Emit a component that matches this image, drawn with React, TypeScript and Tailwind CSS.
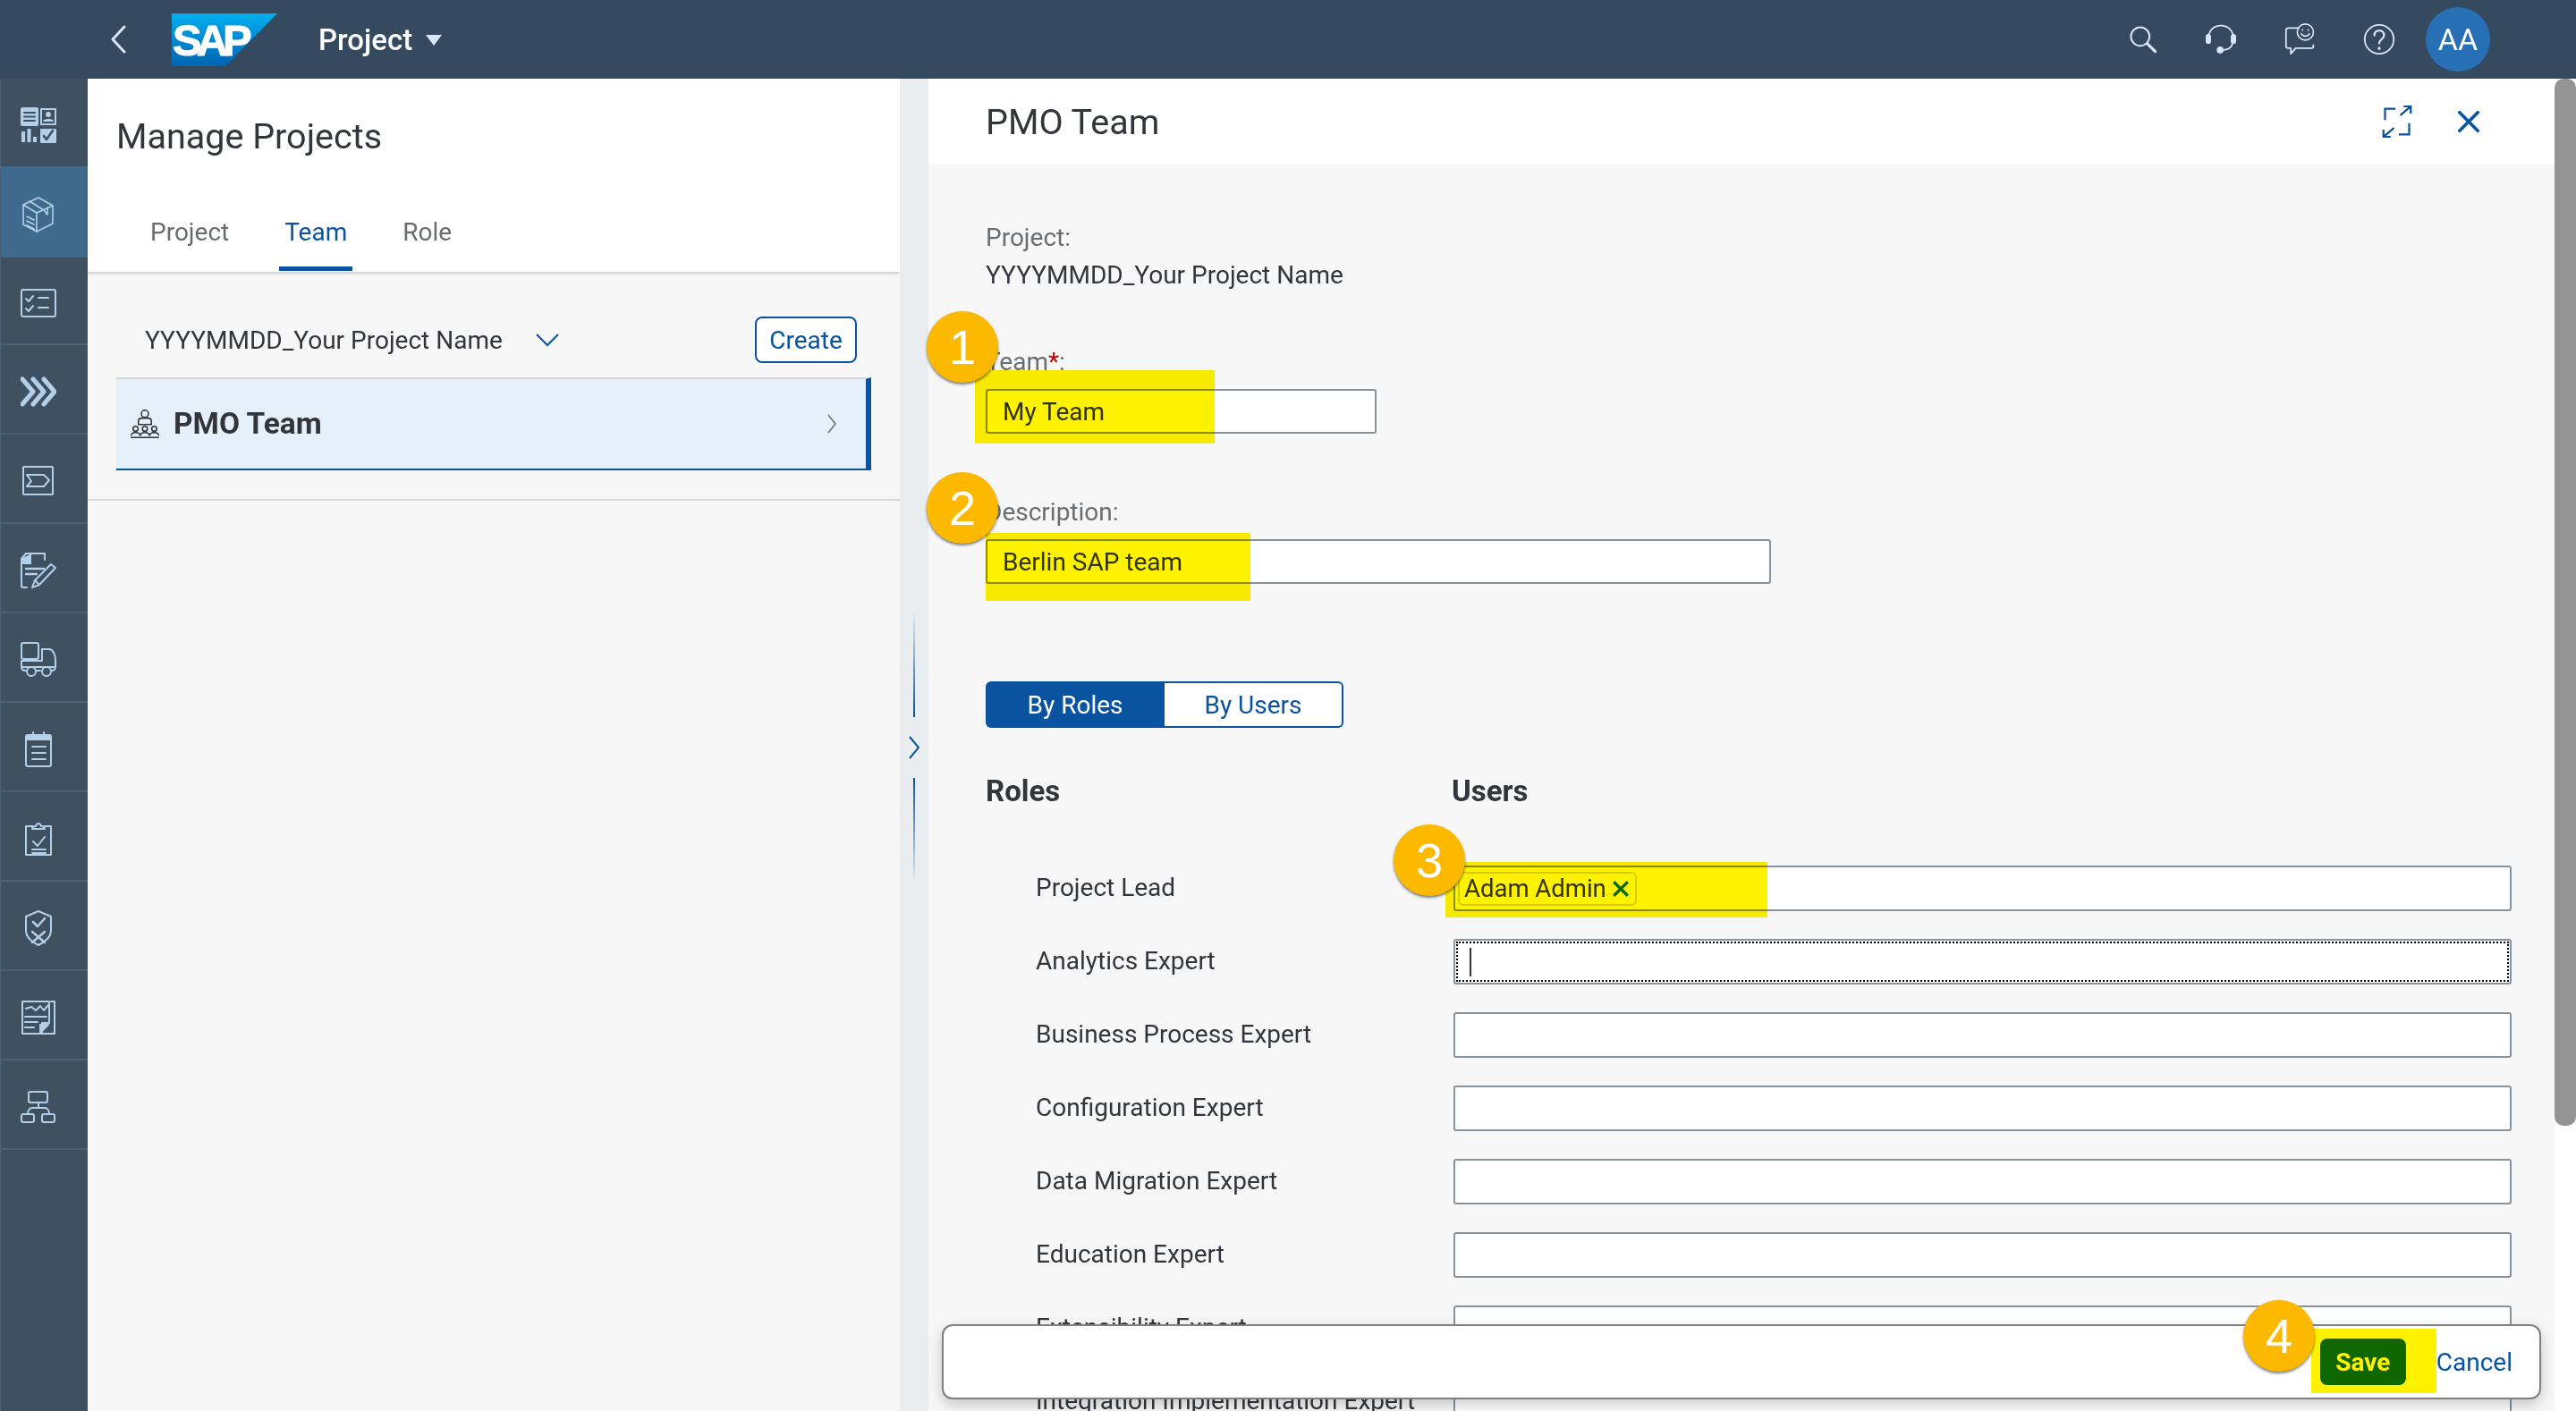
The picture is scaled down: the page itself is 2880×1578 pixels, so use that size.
import React from "react";

const Ic = ({ size = 40, className, children }: { size?: number; className?: string; children: React.ReactNode }) => (
  <svg width={size} height={size} viewBox="0 0 40 40" fill="none" stroke="currentColor" strokeWidth="2" strokeLinecap="round" strokeLinejoin="round" className={className}>
    {children}
  </svg>
);

const navIcons: React.ReactNode[] = [
  <>
    <rect x="1" y="1" width="18" height="19" rx="1" fill="currentColor" />
    <path d="M4 6h12M4 10.500h12M4 15h12" stroke="#3f5161" />
    <rect x="23" y="2" width="16" height="17" stroke="currentColor" />
    <circle cx="31" cy="8" r="3" fill="currentColor" stroke="none" />
    <path d="M25 16c0-4 12-4 12 0z" fill="currentColor" stroke="none" />
    <path d="M3 27v12M9.500 24v15M16 33v6" strokeWidth="4" strokeLinecap="butt" />
    <rect x="22" y="24" width="18" height="16" rx="1" fill="currentColor" stroke="none" />
    <path d="M26 32l3 4 7-10" stroke="#3f5161" strokeWidth="2.500" />
  </>,
  <>
    <path d="M3 9l17-8 16 9v20l-18 9-15-8z" strokeWidth="1.600" />
    <path d="M3 9l15 9v21M18 18l18-8M10 5l16 10 4 5v-8" strokeWidth="1.600" />
    <path d="M7 22l8 4M7 27l8 4M7 32l8 4" strokeWidth="1.600" />
  </>,
  <>
    <rect x="1" y="5" width="38" height="30" rx="2" />
    <path d="M6 15l3 3 5-6M6 26l3 3 5-6M20 14h11M20 25h11" />
  </>,
  <path d="M2 6l12 14-12 14M14 6l12 14-12 14M26 6l12 14-12 14" strokeWidth="5" />,
  <>
    <rect x="3" y="4" width="33" height="31" rx="1" />
    <path d="M7 13h19l6 6-6 7H7l5-6z" />
  </>,
  <>
    <path d="M16 1H6L1 7v30c0 1 1 2 2 2h4" />
    <path d="M16 1h11v7" />
    <path d="M12 1L1 7v6h11z" fill="currentColor" stroke="none" />
    <path d="M6 18h20M6 24h12" strokeWidth="2.400" />
    <path d="M34 13l5 4-18 19-8 3 3-8z" />
    <path d="M16 31l4 4" />
  </>,
  <>
    <rect x="1" y="1" width="19" height="18" rx="2" />
    <path d="M24 8h8c4 0 7 6 7 12v8H1v-7h23z" />
    <path d="M1 28c0 4 3 4 5 4M39 28c0 4-3 4-5 4M18 32h4" />
    <circle cx="12" cy="33" r="5" />
    <circle cx="29" cy="33" r="5" />
  </>,
  <>
    <rect x="6" y="4" width="28" height="35" rx="2" />
    <path d="M6 4h28v6H6z" fill="currentColor" stroke="none" />
    <path d="M14 1v6M26 1v6M13 17h15M13 24h15M13 31h15" />
  </>,
  <>
    <path d="M14 6H6v32h28V6h-8" />
    <path d="M13 9c0-3 3-3 4-3 1-4 5-4 6 0 1 0 4 0 4 3z" fill="none" />
    <path d="M14 23l5 5 8-10M13 32h15M13 36h15" />
  </>,
  <>
    <path d="M20 1L6 7v16c0 8 8 13 14 16 6-3 14-8 14-16V7z" />
    <path d="M14 13l5 5 8-9M13 24l14 12M27 24L13 36" strokeWidth="2.500" />
  </>,
  <>
    <path d="M34 2h4v36H2V2h30v24h-8v12" strokeWidth="2" />
    <path d="M6 10l6-2 5 4 5-5 4 5 5-6" />
    <path d="M5 19h24M5 25h14M5 31h10" />
    <path d="M22 37V28h9L22 37z" fill="currentColor" />
  </>,
  <>
    <rect x="9" y="3" width="21" height="12" rx="2" />
    <rect x="1" y="28" width="14" height="9" rx="2" />
    <rect x="24" y="28" width="14" height="9" rx="2" />
    <path d="M20 15v6M8 28c0-4 2-7 5-7h14c3 0 5 3 5 7" />
  </>,
];

const SapLogo = () => (
  <div className="relative h-[59px] w-[118px]">
    <svg width="118" height="59" viewBox="0 0 118 59" className="absolute inset-0">
      <defs>
        <linearGradient id="sapg" x1="0" y1="0" x2="0" y2="1">
          <stop offset="0" stopColor="#00b0f0" />
          <stop offset="1" stopColor="#0064b2" />
        </linearGradient>
      </defs>
      <polygon points="0,0 118,0 60,59 0,59" fill="url(#sapg)" />
    </svg>
    <span className="absolute left-[1px] top-[6px] text-[49px] font-bold leading-[49px] tracking-[-6px] text-white [-webkit-text-stroke:1px_white] [font-family:'Liberation_Sans',sans-serif]">SAP</span>
  </div>
);

const roles = [
  "Project Lead",
  "Analytics Expert",
  "Business Process Expert",
  "Configuration Expert",
  "Data Migration Expert",
  "Education Expert",
  "Extensibility Expert",
  "Integration Implementation Expert",
];

const RoleInput = ({ index }: { index: number }) => {
  if (index === 0) {
    return (
      <div className="flex h-[51px] items-center rounded-[3px] border-2 border-[#89919a] bg-white pl-[3px]">
        <div className="flex h-[38px] w-[200px] items-center gap-[6px] whitespace-nowrap rounded-[6px] border-2 border-[#d5d8da] pl-[5px] text-[27.500px] text-[#32363a]">
          Adam Admin
          <svg width="20" height="20" viewBox="0 0 18 18" stroke="#0b6e2e" strokeWidth="3">
            <path d="M2 2l14 14M16 2L2 16" />
          </svg>
        </div>
      </div>
    );
  }
  if (index === 1) {
    return (
      <div className="flex h-[51px] items-stretch rounded-[3px] border-2 border-[#89919a] bg-white p-[1px]">
        <div className="flex flex-1 items-center border-2 border-dotted border-black pl-[13px]">
          <div className="h-[32px] w-[2px] bg-[#32363a]" />
        </div>
      </div>
    );
  }
  return <div className="h-[51px] rounded-[3px] border-2 border-[#89919a] bg-white" />;
};

export default function App() {
  return (
    <div className="relative isolate h-[1578px] w-[2880px] overflow-hidden bg-white text-[28px] text-[#32363a] [font-family:Roboto,sans-serif]">
      {/* shell bar */}
      <header className="flex h-[88px] items-center bg-[#354a5f] text-[#d1e8ff]">
        <svg width="20" height="32" viewBox="0 0 20 32" fill="none" stroke="currentColor" strokeWidth="3" strokeLinecap="round" strokeLinejoin="round" className="ml-[123px]">
          <path d="M16 2L3 16l13 14" />
        </svg>
        <div className="ml-[49px]">
          <SapLogo />
        </div>
        <span className="ml-[46px] text-[33px] font-medium leading-none text-white">Project</span>
        <svg width="20" height="14" viewBox="0 0 20 14" className="ml-[14px] mt-[2px]">
          <path d="M1 1h18l-9 12z" fill="#d1e8ff" />
        </svg>
        <div className="ml-auto flex items-center">
          <Ic size={32} className="mr-[54px]">
            <circle cx="16" cy="16" r="13" strokeWidth="2.500" />
            <path d="M26 26l11 11" strokeWidth="4" />
          </Ic>
          <Ic size={34} className="mr-[54px]">
            <path d="M4 20C1 -4 39 -4 36 20c0 8-4 14-14 14" strokeWidth="2" />
            <rect x="1" y="14" width="5" height="11" rx="2.500" fill="currentColor" />
            <rect x="34" y="14" width="5" height="11" rx="2.500" fill="currentColor" />
            <circle cx="19" cy="34" r="3.500" fill="currentColor" />
          </Ic>
          <Ic size={36} className="mr-[52px]">
            <path d="M18 6H5C3 6 2 7 2 9v19c0 2 1 3 3 3h3v7l6-7h20c1 0 2-1 2-2v-2" />
            <circle cx="26" cy="11" r="10" strokeWidth="1.800" />
            <path d="M21 13c2 4 8 4 10 0M22.500 8v1M29.500 8v1" strokeWidth="1.800" />
          </Ic>
          <Ic size={36} className="mr-[34px]">
            <circle cx="20" cy="20" r="18" />
            <path d="M14 15c0-8 12-8 12 0 0 5-6 5-6 10" strokeWidth="2.500" />
            <path d="M20 31v.5" strokeWidth="3.500" />
          </Ic>
          <div className="mr-[96px] flex h-[72px] w-[72px] items-center justify-center rounded-full bg-[#2870b6] text-[34px] text-white">AA</div>
        </div>
      </header>

      <div className="flex h-[1490px]">
        {/* side navigation */}
        <nav className="w-[98px] shrink-0 border-l border-[#4d6275] bg-[#3f5161] text-[#b4cfe8]">
          {navIcons.map((icon, i) => (
            <div
              key={i}
              className={
                i === 1
                  ? "flex h-[102px] items-center justify-center bg-[#3f6a8e] pr-[14px] pt-[6px]"
                  : i === 0
                    ? "flex h-[98px] items-center justify-center pr-[14px] pt-[6px]"
                    : i === 2
                      ? "flex h-[98px] items-center justify-center border-b-2 border-[#4b6276] pr-[14px] pt-[6px]"
                      : "flex h-[100px] items-center justify-center border-b-2 border-[#4b6276] pr-[14px] pt-[6px]"
              }
            >
              <Ic>{icon}</Ic>
            </div>
          ))}
        </nav>

        {/* master list */}
        <section className="w-[908px] shrink-0 bg-[#f7f7f7]">
          <div className="h-[216px] bg-white pt-[41px] shadow-[0_2px_3px_rgba(0,0,0,0.18)]">
            <h1 className="ml-[32px] text-[39.500px] leading-[48px]">Manage Projects</h1>
            <div className="ml-[64px] mt-[40px] flex gap-[50px]">
              <div className="h-[86px] px-[6px] leading-[86px] text-[#6a6d70]">Project</div>
              <div className="h-[86px] border-b-[5px] border-[#0a53a0] px-[6px] leading-[86px] text-[#0a53a0]">Team</div>
              <div className="h-[86px] px-[6px] leading-[86px] text-[#6a6d70]">Role</div>
            </div>
          </div>
          <div className="ml-[64px] mr-[48px] mt-[50px] flex h-[52px] items-center">
            <span className="pt-[2px]">YYYYMMDD_Your Project Name</span>
            <svg width="26" height="16" viewBox="0 0 26 16" fill="none" stroke="#0a53a0" strokeWidth="2" className="ml-[37px]">
              <path d="M1 2l12 12L25 2" />
            </svg>
            <div className="ml-auto flex h-[52px] w-[114px] items-center justify-center rounded-[8px] border-2 border-[#0a53a0] bg-white pt-[1px] text-[#0a53a0]">Create</div>
          </div>
          <div className="ml-[32px] mt-[16px] flex h-[104px] w-[844px] items-center border-b-[2px] border-r-[6px] border-t-2 border-b-[#0a53a0] border-r-[#0a53a0] border-t-[#d5d8da] bg-[#e5f0fa] pl-[16px]">
            <Ic size={32} className="text-[#32363a]">
              <circle cx="20" cy="6" r="5" strokeWidth="2" />
              <path d="M11 21v-5c0-3 3-4 5-4h8c2 0 5 1 5 4v5z" strokeWidth="2" />
              <circle cx="7" cy="27" r="3.500" strokeWidth="2" />
              <circle cx="20" cy="27" r="3.500" strokeWidth="2" />
              <circle cx="33" cy="27" r="3.500" strokeWidth="2" />
              <path d="M1 36c0-5 12-5 12 0M14 36c0-5 12-5 12 0M27 36c0-5 12-5 12 0M1 39h38" strokeWidth="2" />
            </Ic>
            <span className="ml-[16px] text-[33.500px] font-bold">PMO Team</span>
            <svg width="12" height="24" viewBox="0 0 12 24" fill="none" stroke="#6a6d70" strokeWidth="1.500" className="ml-auto mr-[32px]">
              <path d="M2 2l8 10-8 10" />
            </svg>
          </div>
          <div className="mt-[32px] h-[2px] bg-[#d9d9d9]" />
        </section>

        {/* splitter */}
        <div className="flex w-[32px] shrink-0 flex-col items-center bg-[#e9edef]">
          <div className="mt-[595px] h-[119px] w-[2px] bg-gradient-to-b from-transparent to-[#0a53a0]" />
          <svg width="14" height="26" viewBox="0 0 14 26" fill="none" stroke="#0a53a0" strokeWidth="2" className="my-[21px]">
            <path d="M2 1l10 12L2 25" />
          </svg>
          <div className="h-[118px] w-[2px] bg-gradient-to-b from-[#0a53a0] to-transparent" />
        </div>

        {/* detail */}
        <section className="flex flex-1">
          <div className="w-[1818px] overflow-hidden bg-[#f7f7f7]">
            <div className="flex h-[96px] items-center bg-white pl-[64px]">
              <h2 className="pt-[2px] text-[39.500px]">PMO Team</h2>
              <div className="ml-auto flex items-center text-[#0a53a0]">
                <Ic size={36} className="mr-[50px]">
                  <path d="M18 4H5v14M35 22v14H22M24 12L37 1M28 1h9v9M16 28L3 39M3 30v9h9" strokeLinecap="butt" strokeLinejoin="miter" strokeWidth="2.500" />
                </Ic>
                <Ic size={24} className="mr-[84px]">
                  <path d="M3 3l34 34M37 3L3 37" strokeWidth="6" />
                </Ic>
              </div>
            </div>
            <div className="pl-[64px]">
              <div className="mt-[61px] leading-[42px] text-[#6a6d70]">Project:</div>
              <div className="leading-[42px]">YYYYMMDD_Your Project Name</div>
              <div className="mt-[55px] leading-[42px] text-[#6a6d70]">
                Team<span className="text-[#bb0000]">*</span>:
              </div>
              <div className="mt-[9px] flex h-[50px] w-[437px] items-center rounded-[3px] border-2 border-[#89919a] bg-white pl-[17px] pt-[1px]">My Team</div>
              <div className="mt-[67px] leading-[42px] text-[#6a6d70]">Description:</div>
              <div className="mt-[9px] flex h-[50px] w-[878px] items-center rounded-[3px] border-2 border-[#89919a] bg-white pl-[17px] pt-[1px]">Berlin SAP team</div>
              <div className="mt-[109px] flex h-[52px] w-[400px]">
                <div className="flex w-[200px] items-center justify-center rounded-l-[6px] bg-[#0a53a0] pt-[2px] text-white">By Roles</div>
                <div className="flex w-[200px] items-center justify-center rounded-r-[6px] border-2 border-l-0 border-[#0a53a0] bg-white pt-[2px] text-[#0a53a0]">By Users</div>
              </div>
              <div className="mt-[50px] grid grid-cols-[521px_1183px] font-bold text-[33px] leading-[42px]">
                <div>Roles</div>
                <div>Users</div>
              </div>
              <div className="mt-[62px] grid grid-cols-[523px_1183px] gap-y-[31px]">
                {roles.map((role, i) => (
                  <React.Fragment key={role}>
                    <div className="pl-[56px] leading-[50px]">{role}</div>
                    <RoleInput index={i} />
                  </React.Fragment>
                ))}
              </div>
            </div>
          </div>
          <div className="w-[24px] bg-white">
            <div className="h-[1171px] rounded-b-[10px] rounded-t-[10px] bg-[#949494]" />
          </div>
        </section>
      </div>

      {/* floating footer */}
      <div className="absolute left-[1053px] top-[1481px] flex h-[84px] w-[1788px] items-center justify-end rounded-[12px] border-2 border-[#7f7f7f] bg-white pr-[30px] shadow-[0_6px_16px_rgba(0,0,0,0.2)]">
        <div className="mr-[34px] flex h-[52px] w-[96px] items-center justify-center rounded-[8px] bg-[#106c3e] pt-[1px] font-bold text-white">Save</div>
        <span className="pt-[1px] text-[#0a53a0]">Cancel</span>
      </div>

      {/* yellow callouts */}
      <div className="absolute left-[1090px] top-[414px] h-[82px] w-[268px] bg-[#fff200] mix-blend-multiply" />
      <div className="absolute left-[1102px] top-[596px] h-[76px] w-[296px] bg-[#fff200] mix-blend-multiply" />
      <div className="absolute left-[1616px] top-[964px] h-[62px] w-[360px] bg-[#fff200] mix-blend-multiply" />
      <div className="absolute left-[2584px] top-[1486px] h-[72px] w-[140px] bg-[#fff200] mix-blend-multiply" />

      {/* step badges */}
      <div className="absolute left-[1036px] top-[348px] flex h-[80px] w-[80px] items-center justify-center rounded-full bg-[#fdb900] text-[54px] text-white shadow-[0_2px_3px_rgba(0,0,0,0.5)] [font-family:'Liberation_Sans',sans-serif]">1</div>
      <div className="absolute left-[1036px] top-[528px] flex h-[80px] w-[80px] items-center justify-center rounded-full bg-[#fdb900] text-[54px] text-white shadow-[0_2px_3px_rgba(0,0,0,0.5)] [font-family:'Liberation_Sans',sans-serif]">2</div>
      <div className="absolute left-[1558px] top-[922px] flex h-[80px] w-[80px] items-center justify-center rounded-full bg-[#fdb900] text-[54px] text-white shadow-[0_2px_3px_rgba(0,0,0,0.5)] [font-family:'Liberation_Sans',sans-serif]">3</div>
      <div className="absolute left-[2508px] top-[1454px] flex h-[80px] w-[80px] items-center justify-center rounded-full bg-[#fdb900] text-[54px] text-white shadow-[0_2px_3px_rgba(0,0,0,0.5)] [font-family:'Liberation_Sans',sans-serif]">4</div>
    </div>
  );
}
